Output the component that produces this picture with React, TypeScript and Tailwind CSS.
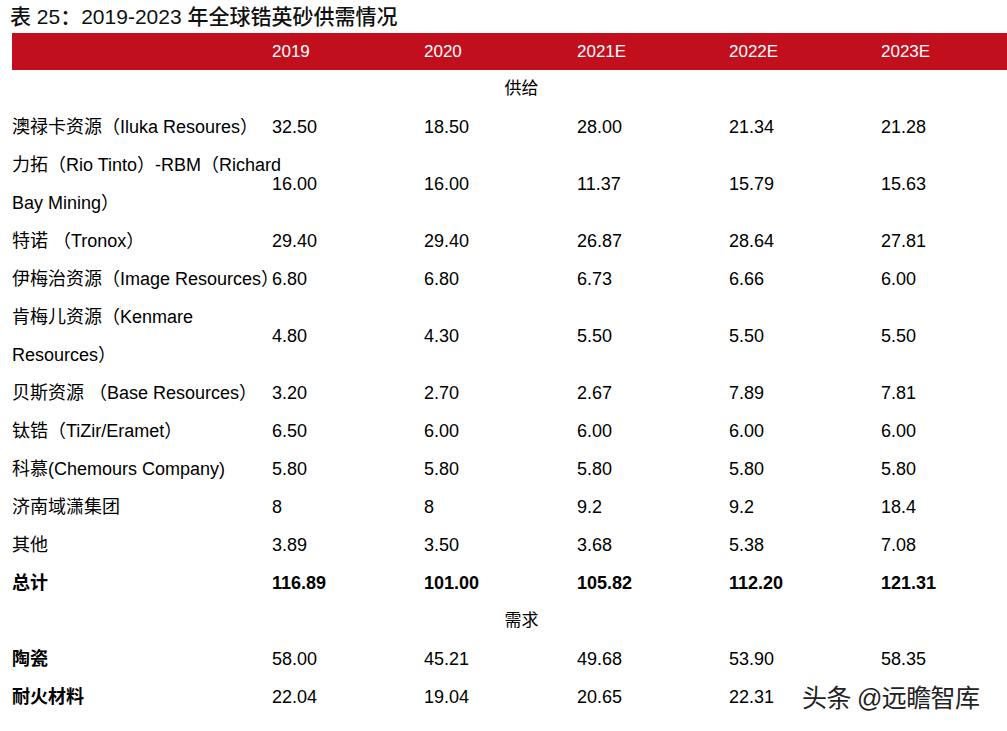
const rows: { label: string[]; vals: string[]; bold?: boolean }[] = [
  { label: ["澳禄卡资源（Iluka Resoures）"], vals: ["32.50", "18.50", "28.00", "21.34", "21.28"] },
  { label: ["力拓（Rio Tinto）-RBM（Richard", "Bay Mining）"], vals: ["16.00", "16.00", "11.37", "15.79", "15.63"] },
  { label: ["特诺 （Tronox）"], vals: ["29.40", "29.40", "26.87", "28.64", "27.81"] },
  { label: ["伊梅治资源（Image Resources）"], vals: ["6.80", "6.80", "6.73", "6.66", "6.00"] },
  { label: ["肯梅儿资源（Kenmare", "Resources）"], vals: ["4.80", "4.30", "5.50", "5.50", "5.50"] },
  { label: ["贝斯资源 （Base Resources）"], vals: ["3.20", "2.70", "2.67", "7.89", "7.81"] },
  { label: ["钛锆（TiZir/Eramet）"], vals: ["6.50", "6.00", "6.00", "6.00", "6.00"] },
  { label: ["科慕(Chemours Company)"], vals: ["5.80", "5.80", "5.80", "5.80", "5.80"] },
  { label: ["济南域潇集团"], vals: ["8", "8", "9.2", "9.2", "18.4"] },
  { label: ["其他"], vals: ["3.89", "3.50", "3.68", "5.38", "7.08"] },
  { label: ["总计"], vals: ["116.89", "101.00", "105.82", "112.20", "121.31"], bold: true },
]

const demand = [
  { label: ["陶瓷"], vals: ["58.00", "45.21", "49.68", "53.90", "58.35"] },
  { label: ["耐火材料"], vals: ["22.04", "19.04", "20.65", "22.31", ""] },
]

const grid = "grid grid-cols-[260px_152px_153px_152px_152px_1fr]"

function Row({ label, vals, bold, boldLabel }: { label: string[]; vals: string[]; bold?: boolean; boldLabel?: boolean }) {
  return (
    <div className={`${grid} ${label.length > 1 ? "h-[76px]" : "h-[38px]"} items-center text-[18px] text-black`}>
      <div className={`leading-[38px] whitespace-nowrap ${bold || boldLabel ? "font-bold" : ""}`}>
        {label.map((l) => (
          <div key={l}>{l}</div>
        ))}
      </div>
      {vals.map((v, i) => (
        <div key={i} className={bold ? "font-bold" : ""}>{v}</div>
      ))}
    </div>
  )
}

export default function App() {
  return (
    <div className="relative w-[1007px] h-[731px] bg-white overflow-hidden pl-3 font-[Liberation_Sans,Noto_Sans_CJK_SC,sans-serif]">
      <div className="h-[33px] flex items-center text-[21px] font-medium text-[#111] -ml-0.5">
        表 25：2019-2023 年全球锆英砂供需情况
      </div>
      <div className={`${grid} h-[37px] items-center bg-[#c20f1d] text-white text-[17px]`}>
        <div />
        <div>2019</div>
        <div>2020</div>
        <div>2021E</div>
        <div>2022E</div>
        <div>2023E</div>
      </div>
      <div className="h-[38px] flex items-center justify-center text-[17px] pl-6">供给</div>
      {rows.map((r) => (
        <Row key={r.label[0]} {...r} />
      ))}
      <div className="h-[38px] flex items-center justify-center text-[17px] pl-6">需求</div>
      {demand.map((r) => (
        <Row key={r.label[0]} {...r} boldLabel />
      ))}
      <div className="absolute left-[802px] top-[680px] text-[25px] text-[#222] tracking-tight [text-shadow:0_0_3px_#fff]">
        头条 @远瞻智库
      </div>
    </div>
  )
}
